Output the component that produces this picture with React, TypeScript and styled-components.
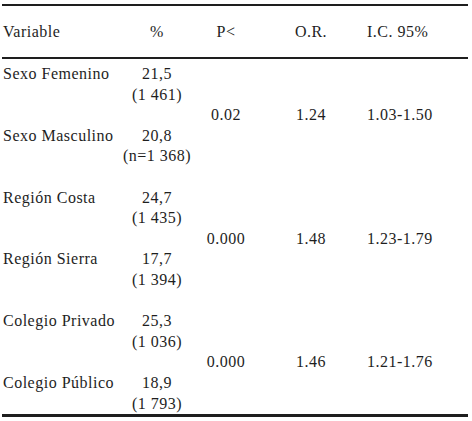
import React from "react";
import styled, { createGlobalStyle } from "styled-components";

const Global = createGlobalStyle`
  html, body { margin: 0; padding: 0; background: #ffffff; }
`;

const Page = styled.div`
  padding: 4px 0 0 2px;
  width: 466px;
`;

const Table = styled.div`
  width: 466px;
  border-top: 2px solid #1e1e1e;
  border-bottom: 3px solid #1e1e1e;
  font-family: "Liberation Serif", "Times New Roman", "DejaVu Serif", serif;
  font-size: 16px;
  letter-spacing: 0.5px;
  color: #1e1e1e;
`;

const COLS = "115px 80px 58px 112px 60px 1fr";

const HeaderRow = styled.div`
  display: grid;
  grid-template-columns: ${COLS};
  align-items: center;
  height: 51px;
  border-bottom: 2px solid #1e1e1e;
`;

const HeaderCell = styled.div<{ $left?: boolean }>`
  text-align: ${(p) => (p.$left ? "left" : "center")};
  padding-left: ${(p) => (p.$left ? "1px" : "0")};
  white-space: nowrap;
`;

const Body = styled.div`
  display: flex;
  flex-direction: column;
  gap: 20.6px;
  padding: 5px 0 0;
`;

const Group = styled.div`
  display: grid;
  grid-template-columns: ${COLS};
  grid-template-rows: repeat(5, 20.6px);
  line-height: 20.6px;
`;

const NameCell = styled.div<{ $row: number }>`
  grid-column: 1;
  grid-row: ${(p) => p.$row};
  padding-left: 1px;
  white-space: nowrap;
`;

const PctCell = styled.div<{ $row: number }>`
  grid-column: 2;
  grid-row: ${(p) => p.$row} / span 2;
  text-align: center;
  white-space: nowrap;
`;

const StatCell = styled.div<{ $col: number }>`
  grid-column: ${(p) => p.$col};
  grid-row: 3;
  text-align: center;
  white-space: nowrap;
`;

type Item = { name: string; pct: string; n: string };
type G = { items: [Item, Item]; p: string; or: string; ci: string };

const groups: G[] = [
  {
    items: [
      { name: "Sexo Femenino", pct: "21,5", n: "(1 461)" },
      { name: "Sexo Masculino", pct: "20,8", n: "(n=1 368)" },
    ],
    p: "0.02",
    or: "1.24",
    ci: "1.03-1.50",
  },
  {
    items: [
      { name: "Región Costa", pct: "24,7", n: "(1 435)" },
      { name: "Región Sierra", pct: "17,7", n: "(1 394)" },
    ],
    p: "0.000",
    or: "1.48",
    ci: "1.23-1.79",
  },
  {
    items: [
      { name: "Colegio Privado", pct: "25,3", n: "(1 036)" },
      { name: "Colegio Público", pct: "18,9", n: "(1 793)" },
    ],
    p: "0.000",
    or: "1.46",
    ci: "1.21-1.76",
  },
];

export default function App() {
  return (
    <Page>
      <Global />
      <Table>
        <HeaderRow>
          <HeaderCell $left>Variable</HeaderCell>
          <HeaderCell>%</HeaderCell>
          <HeaderCell>P&lt;</HeaderCell>
          <HeaderCell>O.R.</HeaderCell>
          <HeaderCell>I.C. 95%</HeaderCell>
        </HeaderRow>
        <Body>
          {groups.map((g, i) => (
            <Group key={i}>
              {g.items.map((it, j) => (
                <React.Fragment key={j}>
                  <NameCell $row={j * 3 + 1}>{it.name}</NameCell>
                  <PctCell $row={j * 3 + 1}>
                    {it.pct}
                    <br />
                    {it.n}
                  </PctCell>
                </React.Fragment>
              ))}
              <StatCell $col={3}>{g.p}</StatCell>
              <StatCell $col={4}>{g.or}</StatCell>
              <StatCell $col={5}>{g.ci}</StatCell>
            </Group>
          ))}
        </Body>
      </Table>
    </Page>
  );
}
